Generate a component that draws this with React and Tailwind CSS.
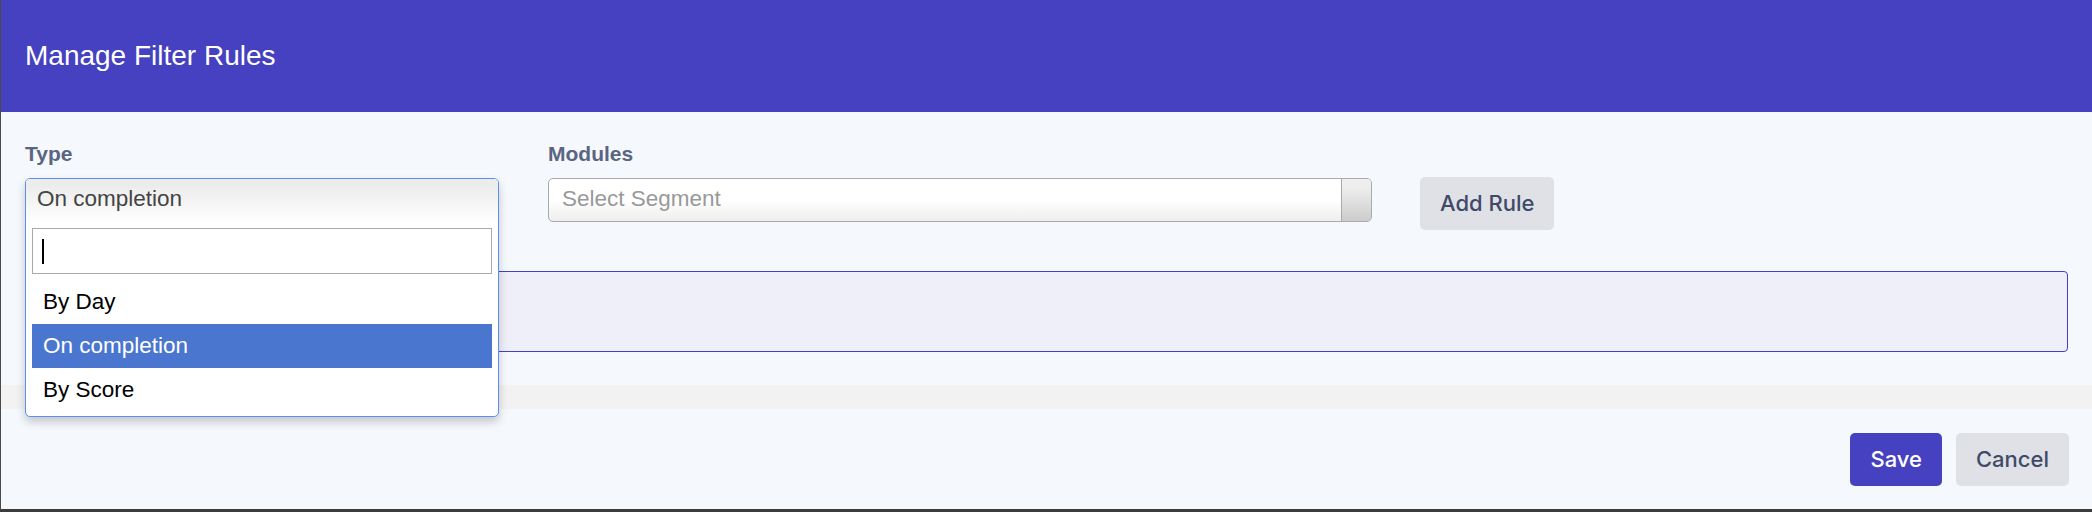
import React from "react";

export default function App() {
  return (
    <div
      className="w-[2092px] h-[512px] flex flex-col bg-[#f5f8fc] border-l border-l-[#4a4a4a] border-b-[3px] border-b-[#3c3c3c] overflow-hidden font-['Liberation_Sans',Arial,sans-serif]"
    >
      {/* Header */}
      <div className="h-[112px] shrink-0 bg-[#4641c0] flex items-center pl-6">
        <h2 className="text-[28px] leading-none text-white font-normal">Manage Filter Rules</h2>
      </div>

      {/* Body */}
      <div className="h-[273px] shrink-0 pt-[30px] pl-6 pr-6 flex flex-col">
        <div className="flex items-start h-[80px]">
          {/* Type */}
          <div className="w-[474px] shrink-0 flex flex-col">
            <label className="text-[21px] leading-[24px] font-bold text-[#5a6582]">Type</label>
            <div className="relative mt-[12px] h-[44px]">
              <div className="absolute top-0 left-0 w-full z-10 bg-white border border-[#5d8fec] rounded-[5px] shadow-[0_5px_10px_rgba(0,0,0,0.2)] overflow-hidden flex flex-col pb-[4px]">
                <div className="h-[43px] flex items-center pl-[11px] pb-[3px] bg-linear-to-b from-[#ececec] from-[15%] to-white text-[22.5px] text-[#444]">
                  On completion
                </div>
                <div className="mx-[6px] mt-[6px] h-[46px] border border-[#aaaaaa] bg-white flex items-center pl-[9px]">
                  <span className="block w-[2px] h-[25px] bg-black" />
                </div>
                <ul className="mx-[6px] mt-[6px] flex flex-col text-[22.5px] text-black">
                  <li className="h-[44px] flex items-center pl-[11px]">By Day</li>
                  <li className="h-[44px] flex items-center pl-[11px] bg-[#4a76cf] text-white">On completion</li>
                  <li className="h-[44px] flex items-center pl-[11px]">By Score</li>
                </ul>
              </div>
            </div>
          </div>

          {/* Modules */}
          <div className="w-[824px] ml-[49px] shrink-0 flex flex-col">
            <label className="text-[21px] leading-[24px] font-bold text-[#5a6582]">Modules</label>
            <div className="mt-[12px] h-[44px] flex border border-[#aaaaaa] rounded-[5px] overflow-hidden bg-linear-to-b from-white from-[50%] to-[#eeeeee]">
              <div className="flex-1 flex items-center pl-[13px] pb-[3px] text-[22.5px] text-[#999]">Select Segment</div>
              <div className="w-[30px] border-l border-[#aaaaaa] bg-linear-to-b from-[#eeeeee] from-[20%] to-[#cccccc]" />
            </div>
          </div>

          {/* Add Rule */}
          <button className="ml-[48px] mt-[35px] h-[53px] px-[20px] rounded-[5px] bg-[#e0e1e6] text-[#3f4a69] text-[22px] font-medium font-['Inter',sans-serif]">
            Add Rule
          </button>
        </div>

        {/* Rules box */}
        <div className="mt-[49px] h-[81px] border border-[#4641c0] rounded-[4px] bg-[#efeff9]" />
      </div>

      {/* Gray strip */}
      <div className="h-[24px] shrink-0 bg-[#f2f2f2]" />

      {/* Footer */}
      <div className="flex-1 flex items-center justify-end gap-[14px] pr-[23px]">
        <button className="h-[53px] px-[20px] rounded-[5px] bg-[#4641c0] text-white text-[22px] font-medium font-['Inter',sans-serif]">
          Save
        </button>
        <button className="h-[53px] px-[20px] rounded-[5px] bg-[#e0e1e6] text-[#3f4a69] text-[22px] font-medium font-['Inter',sans-serif]">
          Cancel
        </button>
      </div>
    </div>
  );
}
